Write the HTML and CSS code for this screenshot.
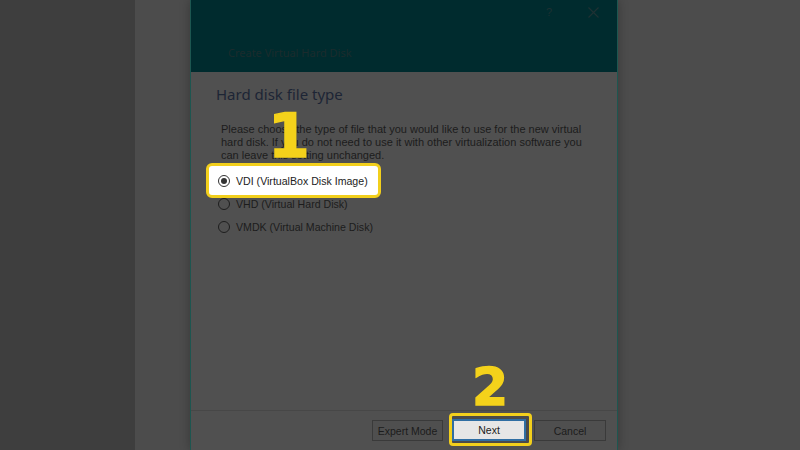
FILE: index.html
```html
<!DOCTYPE html>
<html>
<head>
<meta charset="utf-8">
<link rel="stylesheet" href="styles.css">
</head>
<body>
<div class="desk">
  <div class="desk-left"></div>
  <div class="desk-main">
    <div class="dialog">
      <div class="header">
        <div class="controls">
          <span class="help">?</span>
          <svg class="close" width="11" height="11" viewBox="0 0 11 11"><path d="M0.5 0.5L10.5 10.5M10.5 0.5L0.5 10.5" stroke="#1e3133" stroke-width="1.2" fill="none"/></svg>
        </div>
        <div class="title">Create Virtual Hard Disk</div>
      </div>
      <div class="content">
        <h2 class="heading">Hard disk file type</h2>
        <p class="desc">Please choose the type of file that you would like to use for the new virtual hard disk. If you do not need to use it with other virtualization software you can leave this setting unchanged.</p>
        <div class="options">
          <div class="opt hl">
            <span class="radio checked"></span>
            <span class="label">VDI (VirtualBox Disk Image)</span>
          </div>
          <div class="opt">
            <span class="radio"></span>
            <span class="label">VHD (Virtual Hard Disk)</span>
          </div>
          <div class="opt">
            <span class="radio"></span>
            <span class="label">VMDK (Virtual Machine Disk)</span>
          </div>
        </div>
      </div>
      <div class="footer">
        <button class="btn expert">Expert Mode</button>
        <div class="btn-hl"><button class="btn next">Next</button></div>
        <button class="btn cancel">Cancel</button>
      </div>
    </div>
  </div>
</div>
<div class="step step1">1</div>
<div class="step step2">2</div>
</body>
</html>
```

FILE: styles.css
```css
html, body {
  margin: 0;
  padding: 0;
  width: 800px;
  height: 450px;
  overflow: hidden;
  background: #4c4c4c;
  font-family: "Liberation Sans", Arial, sans-serif;
}

.desk {
  display: flex;
  height: 450px;
}

.desk-left {
  width: 135px;
  background: #3e3e3e;
  flex: none;
}

.desk-main {
  flex: 1;
  background: #4c4c4c;
}

.dialog {
  margin-left: 55px;
  width: 426px;
  height: 450px;
  display: flex;
  flex-direction: column;
  background: #505050;
  border-left: 1px solid #1d5650;
  border-right: 1px solid #1d5650;
  box-shadow: 0 0 10px rgba(0, 0, 0, 0.28);
}

.header {
  height: 72px;
  background: #002b2e;
  position: relative;
  flex: none;
}

.controls {
  display: flex;
  justify-content: flex-end;
  align-items: center;
  height: 24px;
  padding-right: 18px;
  gap: 36px;
}

.help {
  color: #1e3133;
  font-family: "Liberation Sans", sans-serif;
  font-size: 11px;
}

.close {
  display: block;
}

.title {
  padding-left: 37px;
  margin-top: 22px;
  color: #1b2b2d;
  font-family: "Noto Sans", sans-serif;
  font-size: 11px;
  line-height: 14px;
}

.content {
  flex: 1;
  padding: 12px 0 0 25px;
}

.heading {
  margin: 0;
  font-family: "Noto Sans", sans-serif;
  font-weight: 400;
  font-size: 15px;
  line-height: 20px;
  color: #1d2535;
}

.desc {
  margin: 19px 0 0 5px;
  width: 372px;
  font-size: 11px;
  line-height: 13px;
  color: #1c1c1c;
}

.options {
  margin-top: 7px;
  padding-left: 2px;
  display: flex;
  flex-direction: column;
}

.opt {
  display: flex;
  align-items: center;
  height: 23px;
  font-size: 10.6px;
  color: #1c1c1c;
}

.opt.hl {
  align-self: flex-start;
  height: 29px;
  margin: -6px 0 -6px -12px;
  padding: 0 10px 0 9px;
  border: 3px solid #f2cf1c;
  border-radius: 6px;
  background: #ffffff;
  color: #222;
}

.radio {
  width: 10px;
  height: 10px;
  border: 1px solid #1e1e1e;
  border-radius: 50%;
  margin-right: 6px;
  position: relative;
  flex: none;
}

.radio.checked {
  border-color: #333;
}

.radio.checked::after {
  content: "";
  position: absolute;
  left: 2px;
  top: 2px;
  width: 6px;
  height: 6px;
  border-radius: 50%;
  background: #333;
}

.footer {
  height: 30px;
  flex: none;
  border-top: 1px solid #474747;
  display: flex;
  justify-content: flex-end;
  align-items: flex-start;
  padding: 9px 11px 0 0;
}

.btn {
  font-family: "Liberation Sans", Arial, sans-serif;
  font-size: 10.5px;
  color: #1c1c1c;
  height: 21px;
  padding: 0;
  background: #4f4f4f;
  border: 1px solid #3a3a3a;
  margin: 0;
}

.expert {
  width: 71px;
  margin-right: 6px;
}

.btn-hl {
  margin-top: -7px;
  padding: 3px 3px 2px 0;
  border: 3px solid #f2cf1c;
  border-radius: 4px;
  background: #4a4a4a;
}

.next {
  display: block;
  width: 74px;
  height: 22px;
  background: #e6e6e6;
  border: 2px solid #2f6ea3;
  color: #222;
}

.cancel {
  width: 72px;
  margin-left: 2px;
}

.step {
  position: absolute;
  font-family: "DejaVu Sans", sans-serif;
  font-weight: 700;
  line-height: 1;
  color: #f4d21b;
  -webkit-text-stroke: 1.5px #f4d21b;
  text-shadow: 0 0 1px #2a2a2a;
}

.step1 {
  left: 268px;
  top: 106px;
  font-size: 60px;
}

.step2 {
  left: 472px;
  top: 361px;
  font-size: 52px;
}
```
